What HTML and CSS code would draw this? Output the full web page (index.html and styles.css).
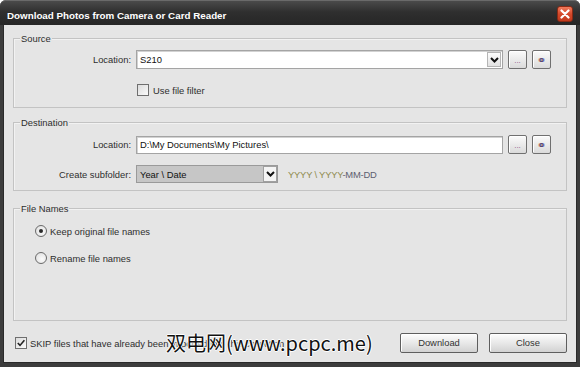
FILE: index.html
```html
<!DOCTYPE html>
<html>
  <head>
    <meta charset="UTF-8" />
    <title>Download Photos from Camera or Card Reader</title>
    <link rel="stylesheet" href="styles.css">
  </head>
  <body>
    <div class="window">
      <div class="titlebar">
        <span class="title">Download Photos from Camera or Card Reader</span>
        <span class="close-btn">
          <svg width="10" height="10" viewBox="0 0 10 10">
            <path d="M1.5 1.5 L8.5 8.5 M8.5 1.5 L1.5 8.5" stroke="#fff" stroke-width="2.2" stroke-linecap="round" />
          </svg>
        </span>
      </div>

      <div class="client">
        <div class="group source">
          <span class="legend">Source</span>
          <div class="row">
            <span class="lbl">Location:</span>
            <div class="field combo">
              <span class="val">S210</span>
              <span class="arrow">
                <svg width="9" height="6" viewBox="0 0 9 6"><path d="M1 1 L4.5 4.5 L8 1" fill="none" stroke="#111" stroke-width="2" /></svg>
              </span>
            </div>
            <span class="mini dots">...</span>
            <span class="mini ring">o</span>
          </div>
          <div class="row check-row">
            <span class="lbl"></span>
            <span class="checkbox"></span>
            <span class="text">Use file filter</span>
          </div>
        </div>

        <div class="group dest">
          <span class="legend">Destination</span>
          <div class="row">
            <span class="lbl">Location:</span>
            <div class="field"><span class="val">D:\My Documents\My Pictures\</span></div>
            <span class="mini dots">...</span>
            <span class="mini ring">o</span>
          </div>
          <div class="row sub-row">
            <span class="lbl">Create subfolder:</span>
            <div class="field select">
              <span class="val">Year \ Date</span>
              <span class="arrow">
                <svg width="9" height="6" viewBox="0 0 9 6"><path d="M1 1 L4.5 4.5 L8 1" fill="none" stroke="#111" stroke-width="2" /></svg>
              </span>
            </div>
            <span class="hint">YYYY \ YYYY<span class="dark">-MM-DD</span></span>
          </div>
        </div>

        <div class="group names">
          <span class="legend">File Names</span>
          <div class="radio-row">
            <span class="radio on"></span>
            <span class="text">Keep original file names</span>
          </div>
          <div class="radio-row">
            <span class="radio"></span>
            <span class="text">Rename file names</span>
          </div>
        </div>

        <div class="footer">
          <span class="checkbox checked">
            <svg width="10" height="10" viewBox="0 0 10 10"><path d="M1.8 5 L4 7.4 L8.4 2.2" fill="none" stroke="#222" stroke-width="1.6" /></svg>
          </span>
          <span class="text">SKIP files that have already been imported into this collection</span>
          <span class="spacer"></span>
          <span class="btn">Download</span>
          <span class="btn">Close</span>
          <span class="watermark">双电网(www.pcpc.me)</span>
        </div>
      </div>
    </div>
  </body>
</html>
```

FILE: styles.css
```css
html, body {
  margin: 0;
  background: #fff;
}

body {
  font-family: 'Liberation Sans', Arial, sans-serif;
  font-size: 9.4px;
  color: #2e2e2e;
}

.window {
  width: 580px;
  height: 367px;
  box-sizing: border-box;
  background: #3c3c3c;
  border-radius: 6px 6px 0 0;
  padding: 0 4px 4px;
  display: flex;
  flex-direction: column;
}

.titlebar {
  height: 27px;
  margin: 0 -4px;
  padding: 0 4px 0 7px;
  display: flex;
  align-items: center;
  border-radius: 6px 6px 0 0;
  background: linear-gradient(#4a4a4a, #2f2f2f 45%, #262626);
  border-top: 1px solid #6a6a6a;
  box-sizing: border-box;
}

.title {
  flex: 1;
  color: #fff;
  font-weight: bold;
  font-size: 9.8px;
  margin-top: 4px;
}

.close-btn {
  width: 16px;
  height: 16px;
  margin-right: 3px;
  margin-top: 2px;
  border-radius: 3px;
  background: linear-gradient(#f07a5c, #d4482a 50%, #c23a1d);
  border: 1px solid #8a2a15;
  box-sizing: border-box;
  display: flex;
  align-items: center;
  justify-content: center;
}

.client {
  flex: 1;
  background: #e5e5e5;
  padding: 13px 9px 9px;
  display: flex;
  flex-direction: column;
  border: 1px solid #2a2a2a;
  border-top: none;
  margin: 0 -1px;
}

.group {
  position: relative;
  border: 1px solid #c3c3c3;
  box-shadow: inset 1px 1px 0 #f2f2f2;
}

.legend {
  position: absolute;
  top: -6px;
  left: 6px;
  padding: 0 1px;
  background: #e5e5e5;
  line-height: 11px;
}

.source {
  height: 70px;
  box-sizing: border-box;
  padding-top: 11px;
}

.dest {
  margin-top: 14px;
  height: 69px;
  box-sizing: border-box;
  padding-top: 12px;
}

.names {
  margin-top: 17px;
  height: 113px;
  box-sizing: border-box;
  padding: 16px 0 0 21px;
}

.row {
  display: flex;
  align-items: center;
  padding-right: 15px;
}

.lbl {
  width: 117px;
  flex: none;
  text-align: right;
  margin-right: 5px;
}

.field {
  flex: 1;
  height: 19px;
  box-sizing: border-box;
  background: #fff;
  border: 1px solid #a4a4a4;
  box-shadow: inset 1px 1px 0 #d2d2d2;
  display: flex;
  align-items: center;
  color: #111;
  margin-right: 5px;
}

.dest .field {
  height: 18px;
}

.val {
  flex: 1;
  padding-left: 3px;
  white-space: nowrap;
}

.arrow {
  width: 14px;
  height: 15px;
  margin-right: 1px;
  box-sizing: border-box;
  border: 1px solid #b5b5b5;
  background: linear-gradient(#fdfdfd, #e2e2e2);
  display: flex;
  align-items: center;
  justify-content: center;
}

.mini {
  width: 19px;
  height: 19px;
  flex: none;
  box-sizing: border-box;
  border: 1px solid #707070;
  border-radius: 2px;
  background: linear-gradient(#fbfbfb, #dadada);
  box-shadow: inset 1px 1px 0 #fff;
  display: flex;
  align-items: center;
  justify-content: center;
  font-size: 8px;
}

.mini + .mini {
  margin-left: 5px;
}

.dots {
  color: #8a4f86;
  line-height: 1;
  padding-top: 3px;
}

.ring {
  color: #4a3a6a;
  font-weight: bold;
  font-size: 8px;
  text-shadow: -1px 0 0 rgba(220, 120, 40, 0.5), 1px 0 0 rgba(40, 80, 200, 0.5);
}

.check-row {
  margin-top: 15px;
}

.checkbox {
  width: 12px;
  height: 12px;
  flex: none;
  box-sizing: border-box;
  border: 1px solid #6f6f6f;
  background: linear-gradient(135deg, #dcdcdc, #fafafa);
  display: flex;
  align-items: center;
  justify-content: center;
  margin-right: 4px;
}

.check-row .checkbox {
  margin-left: 1px;
}

.sub-row {
  margin-top: 11px;
}

.select {
  flex: none;
  width: 142px;
  background: #c6c6c6;
  box-shadow: none;
  border-color: #9a9a9a;
  margin-right: 10px;
}

.select .arrow {
  height: 16px;
  margin-right: 0;
  border-color: #a0a0a0;
  background: #f4f4f4;
}

.hint {
  color: #8f8a4e;
  letter-spacing: -0.2px;
}

.hint .dark {
  color: #5d6070;
}

.radio-row {
  display: flex;
  align-items: center;
  height: 12px;
}

.radio-row + .radio-row {
  margin-top: 15px;
}

.radio {
  width: 12px;
  height: 12px;
  box-sizing: border-box;
  border-radius: 50%;
  border: 1px solid #6a6a6a;
  background: radial-gradient(circle at 60% 60%, #fbfbfb, #dcdcdc);
  margin-right: 3px;
  position: relative;
}

.radio.on::after {
  content: '';
  position: absolute;
  left: 3px;
  top: 3px;
  width: 4px;
  height: 4px;
  border-radius: 50%;
  background: #2a2a2a;
}

.footer {
  margin-top: 12px;
  display: flex;
  align-items: center;
  padding-left: 2px;
  position: relative;
}

.footer .checkbox {
  margin-right: 3px;
}

.spacer {
  flex: 1;
}

.btn {
  width: 78px;
  height: 20px;
  box-sizing: border-box;
  border: 1px solid #5e5e5e;
  border-radius: 2px;
  background: linear-gradient(#fdfdfd, #e8e8e8 50%, #d2d2d2);
  box-shadow: inset 1px 1px 0 #fff;
  display: flex;
  align-items: center;
  justify-content: center;
  color: #333;
  padding-bottom: 2px;
}

.btn + .btn {
  margin-left: 11px;
}

.watermark {
  position: absolute;
  left: 153px;
  top: -2px;
  font-family: 'Noto Sans CJK SC', sans-serif;
  font-size: 20px;
  line-height: 24px;
  color: #111;
  white-space: nowrap;
  letter-spacing: 0;
  text-shadow: 1px 0 0 #fff, -1px 0 0 #fff, 0 1px 0 #fff, 0 -1px 0 #fff;
}
```
